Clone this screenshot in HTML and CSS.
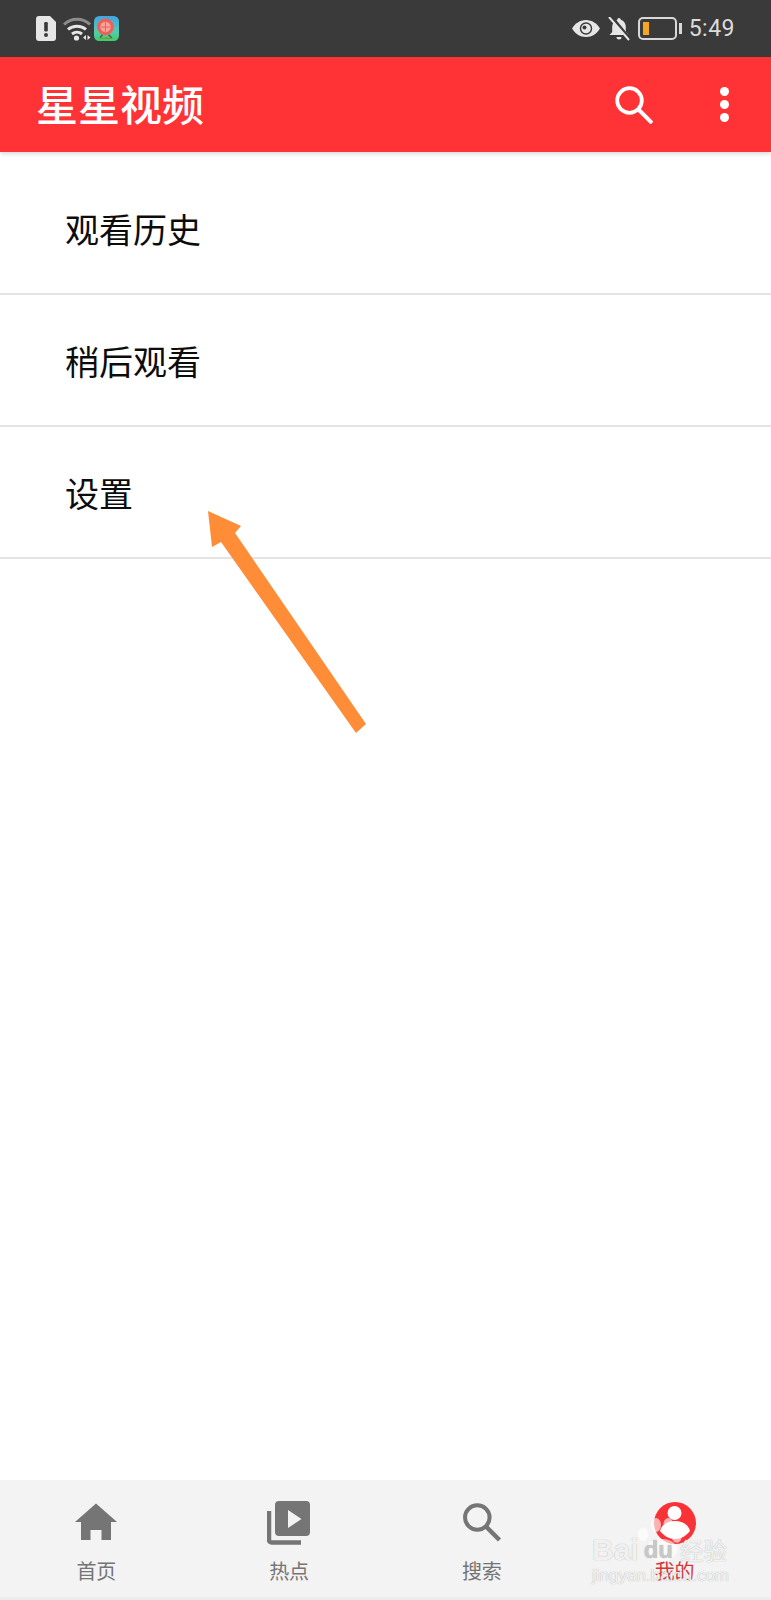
FILE: index.html
```html
<!DOCTYPE html>
<html lang="zh-CN">
<head>
  <meta charset="UTF-8">
  <meta name="viewport" content="width=device-width, initial-scale=1.0">
  <title>星星视频</title>
  <link rel="stylesheet" href="styles.css">
</head>
<body>

  <div class="status-bar">
    <div class="status-left">
      <svg class="ic-alert" viewBox="0 0 20 25"><path fill="#e6e6e6" d="M3 0h11l6 6v16a3 3 0 0 1-3 3H3a3 3 0 0 1-3-3V3a3 3 0 0 1 3-3z"/><rect x="8.200" y="6" width="3.600" height="9.500" rx="1.200" fill="#3a3a3a"/><circle cx="10" cy="19" r="2" fill="#3a3a3a"/></svg>
      <svg class="ic-wifi" viewBox="0 0 28 24">
        <path d="M1 7.500C8 .5 20 .5 27 7.500" fill="none" stroke="#8c8c8c" stroke-width="3"/>
        <path d="M5 12.500c5-4.500 13-4.500 18 0" fill="none" stroke="#e6e6e6" stroke-width="3"/>
        <path d="M9 17c3-2.500 7-2.500 10 0" fill="none" stroke="#e6e6e6" stroke-width="3"/>
        <circle cx="13.500" cy="21" r="2.600" fill="#e6e6e6"/>
        <path d="M23 18v5l-3-2.500zM24.500 18l3 2.500-3 2.500z" fill="#e6e6e6"/>
      </svg>
      <svg class="ic-app" viewBox="0 0 24 24">
        <defs><linearGradient id="appBg" x1="0" y1="0" x2="0" y2="1"><stop offset="0" stop-color="#3fa6e4"/><stop offset="0.6" stop-color="#58c8b0"/><stop offset="1" stop-color="#38cf6c"/></linearGradient></defs>
        <rect width="24" height="24" rx="5" fill="url(#appBg)"/>
        <circle cx="11" cy="10.500" r="8" fill="#ee5f5b"/>
        <circle cx="11" cy="10.500" r="5" fill="#f8a598"/>
        <path d="M11 6v9M6.500 10.500h9" stroke="#ee5f5b" stroke-width="1"/>
        <path d="M8 18l-2 3M14 18l3 3" stroke="#6a5a2a" stroke-width="1.500"/>
        <path d="M4 22l8-1.500 8 1.500z" fill="#7c9a3a"/>
      </svg>
    </div>
    <div class="status-right">
      <svg class="ic-eye" viewBox="0 0 28 17"><path fill="#e6e6e6" d="M14 0C8 0 3 3.500 0 8.500 3 13.500 8 17 14 17s11-3.500 14-8.500C25 3.500 20 0 14 0z"/><circle cx="14" cy="8.500" r="6.200" fill="#3a3a3a"/><circle cx="14" cy="8.500" r="4.800" fill="#e6e6e6"/><circle cx="12.500" cy="7.500" r="2" fill="#3a3a3a"/></svg>
      <svg class="ic-bell" viewBox="0 0 22 24"><path fill="#e6e6e6" d="M11 1c1 0 1.800.7 1.800 1.800 3.200 1 5 3.700 5 7v5l2.700 3.200H1.500L4.200 15v-5c0-3.300 1.800-6 5-7C9.200 1.700 10 1 11 1zM8.500 20h5a2.500 2.500 0 0 1-5 0z"/><path d="M3 -1l19 23" stroke="#3a3a3a" stroke-width="3"/><path d="M1 0l20 23" stroke="#e6e6e6" stroke-width="2"/></svg>
      <div class="battery"><div class="battery-body"><div class="battery-level"></div></div><div class="battery-cap"></div></div>
      <span class="clock">5:49</span>
    </div>
  </div>

  <div class="app-bar">
    <span class="app-title">星星视频</span>
    <div class="app-actions">
      <svg class="ic-search" viewBox="0 0 38 38"><circle cx="14.500" cy="14.500" r="12.300" fill="none" stroke="#fff" stroke-width="3.800"/><path d="M23.500 23.500L37 37" stroke="#fff" stroke-width="4"/></svg>
      <div class="dots"><i></i><i></i><i></i></div>
    </div>
  </div>

  <div class="menu">
    <div class="menu-row">观看历史</div>
    <div class="menu-row">稍后观看</div>
    <div class="menu-row">设置</div>
  </div>

  <div class="tab-bar">
    <div class="tab">
      <svg class="tab-icon" viewBox="0 0 44 44"><path fill="#757575" d="M22 2.500L1 21h6v18h9.500V29h11v10H37V21h6z"/></svg>
      <span>首页</span>
    </div>
    <div class="tab">
      <svg class="tab-icon" viewBox="0 0 44 44"><path fill="#757575" d="M12 0h27a4 4 0 0 1 4 4v27a4 4 0 0 1-4 4H12a4 4 0 0 1-4-4V4a4 4 0 0 1 4-4z"/><path fill="#f3f3f3" d="M21 9l13.500 9L21 27z"/><path d="M2 10v29a2.500 2.500 0 0 0 2.500 2.500H34" fill="none" stroke="#757575" stroke-width="4.500"/></svg>
      <span>热点</span>
    </div>
    <div class="tab">
      <svg class="tab-icon" viewBox="0 0 44 44"><circle cx="17.300" cy="16.500" r="12.300" fill="none" stroke="#757575" stroke-width="4"/><path d="M26.500 26l13 13" stroke="#757575" stroke-width="4.500"/></svg>
      <span>搜索</span>
    </div>
    <div class="tab tab-active">
      <svg class="tab-icon" viewBox="0 0 44 44"><circle cx="22" cy="22" r="21" fill="#f93236"/><circle cx="21.500" cy="12" r="7" fill="#fff"/><path fill="#fff" d="M7 30c2-7 8-10 15-10s13 3 15 10c-4 5-9 8-15 8S11 35 7 30z"/></svg>
      <span>我的</span>
    </div>
  </div>
  <div class="bottom-edge"></div>

  <svg class="arrow" viewBox="0 0 771 1600"><polygon fill="#ff8c37" points="208,511 241,526 235,533 366,724 356,733 221,542 212,547"/></svg>

  <div class="watermark">
    <svg class="paw" viewBox="0 0 60 60"><g fill="#fff" fill-opacity="0.62"><ellipse cx="13.300" cy="19.300" rx="5" ry="7"/><ellipse cx="26" cy="10" rx="5" ry="7"/><ellipse cx="38.300" cy="10" rx="5" ry="7"/><ellipse cx="46.700" cy="21.700" rx="5" ry="6"/><ellipse cx="31.700" cy="35" rx="16" ry="11"/></g></svg>
    <div class="wm-top"><b>Bai</b><b class="wm-du">du</b><span>经验</span></div>
    <div class="wm-url">jingyan.baidu.com</div>
  </div>

</body>
</html>
```

FILE: styles.css
```css
* {
  box-sizing: border-box;
}
body {
  font-family: "Noto Sans CJK SC", "Liberation Sans", sans-serif;
  margin: 0;
  padding: 0;
  width: 771px;
  height: 1600px;
  overflow: hidden;
  position: relative;
  display: flex;
  flex-direction: column;
  background-color: #fff;
}
svg {
  display: block;
}

/* status bar */
.status-bar {
  height: 57px;
  flex: none;
  background-color: #3a3a3a;
  display: flex;
  justify-content: space-between;
  align-items: center;
  padding: 0 36px 0 36px;
}
.status-left,
.status-right {
  display: flex;
  align-items: center;
}
.ic-alert {
  width: 20px;
  height: 25px;
  margin-right: 7px;
}
.ic-wifi {
  width: 28px;
  height: 24px;
  margin-right: 3px;
}
.ic-app {
  width: 25px;
  height: 25px;
}
.ic-eye {
  width: 28px;
  height: 17px;
  margin-right: 8px;
}
.ic-bell {
  width: 22px;
  height: 24px;
  margin-right: 8px;
}
.battery {
  display: flex;
  align-items: center;
  margin-right: 7px;
}
.battery-body {
  width: 39px;
  height: 23px;
  border: 2px solid #d8d8d8;
  border-radius: 5px;
  padding: 3px;
}
.battery-level {
  width: 6px;
  height: 100%;
  background-color: #f5a623;
}
.battery-cap {
  width: 3px;
  height: 11px;
  margin-left: 2px;
  background-color: #d8d8d8;
}
.clock {
  font-family: Roboto, sans-serif;
  font-size: 23px;
  color: #dcdcdc;
  letter-spacing: 0.5px;
}

/* app bar */
.app-bar {
  height: 95px;
  flex: none;
  background-color: #ff3236;
  display: flex;
  justify-content: space-between;
  align-items: center;
  padding: 0 36px;
  box-shadow: 0 2px 4px rgba(0, 0, 0, 0.15);
  position: relative;
}
.app-title {
  font-size: 42px;
  font-weight: 500;
  color: #fff;
  line-height: 1;
  margin-bottom: 4px;
}
.app-actions {
  display: flex;
  align-items: center;
}
.ic-search {
  width: 38px;
  height: 38px;
  margin-right: 67px;
}
.dots {
  display: flex;
  flex-direction: column;
  gap: 4px;
  margin-right: 6px;
}
.dots i {
  display: block;
  width: 9px;
  height: 9px;
  border-radius: 50%;
  background-color: #fff;
}

/* menu */
.menu {
  flex: 1;
}
.menu-row {
  height: 132px;
  padding: 1px 65px 0;
  display: flex;
  align-items: center;
  font-size: 34px;
  color: #0c0c0c;
  border-bottom: 2px solid #e4e4e4;
}
.menu-row:first-child {
  height: 143px;
  padding-top: 11px;
}

/* bottom tabs */
.tab-bar {
  height: 117px;
  flex: none;
  background-color: #f3f3f3;
  display: flex;
}
.tab {
  flex: 1;
  display: flex;
  flex-direction: column;
  align-items: center;
  padding-top: 21px;
  font-size: 20px;
  line-height: 30px;
  color: #757575;
}
.tab span {
  margin-top: 11px;
}
.tab-icon {
  width: 44px;
  height: 44px;
}
.tab-active {
  color: #d8343a;
}
.bottom-edge {
  height: 3px;
  flex: none;
  background-color: #ececec;
}

/* overlays */
.arrow {
  position: absolute;
  left: 0;
  top: 0;
  width: 771px;
  height: 1600px;
  pointer-events: none;
}
.watermark {
  position: absolute;
  left: 592px;
  top: 1535px;
  width: 140px;
  color: rgba(255, 255, 255, 0.85);
  text-shadow: 0 0 1px rgba(140, 140, 140, 0.8);
}
.paw {
  position: absolute;
  left: 38px;
  top: -20px;
  width: 60px;
  height: 60px;
}
.wm-top {
  position: relative;
  display: flex;
  align-items: center;
  height: 30px;
  font-family: "Liberation Sans", sans-serif;
  font-size: 30px;
  line-height: 30px;
}
.wm-du {
  font-size: 24px;
  color: rgba(205, 205, 205, 0.9);
  margin-left: 5px;
}
.wm-top span {
  font-family: "Noto Sans CJK SC", sans-serif;
  font-size: 23.500px;
  margin-left: 7px;
}
.wm-url {
  position: relative;
  font-family: "Liberation Sans", sans-serif;
  font-size: 17px;
  line-height: 20px;
  margin-top: 1px;
  white-space: nowrap;
}
```
